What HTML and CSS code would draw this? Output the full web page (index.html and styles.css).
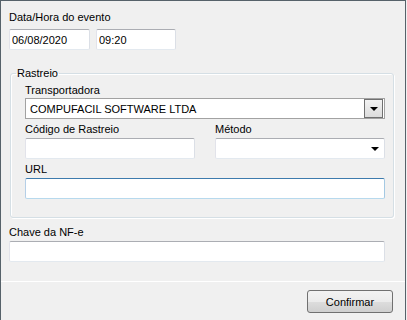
FILE: index.html
```html
<!DOCTYPE html>
<html lang="pt-BR">

<head>
  <meta charset="UTF-8">
  <link rel="stylesheet" href="styles.css">
  <title>Rastreio</title>
</head>

<body>

  <div class="window">
    <div class="content">
      <div class="label">Data/Hora do evento</div>
      <div class="row">
        <input class="field date" type="text" value="06/08/2020">
        <input class="field time" type="text" value="09:20">
      </div>

      <fieldset class="group">
        <legend>Rastreio</legend>
        <div class="label">Transportadora</div>
        <div class="combo">
          <span>COMPUFACIL SOFTWARE LTDA</span>
          <span class="combo-btn"><span class="arrow"></span></span>
        </div>
        <div class="cols">
          <div class="col">
            <div class="label">Código de Rastreio</div>
            <input class="field" type="text">
          </div>
          <div class="col">
            <div class="label">Método</div>
            <div class="select"><span class="arrow"></span></div>
          </div>
        </div>
        <div class="label">URL</div>
        <input class="field focus" type="text">
      </fieldset>

      <div class="label">Chave da NF-e</div>
      <input class="field chave" type="text">
    </div>

    <div class="footer">
      <button class="btn">Confirmar</button>
    </div>
  </div>

</body>

</html>
```

FILE: styles.css
```css
body {
  margin: 0;
  background-color: #f0f0f0;
  font-family: 'Liberation Sans', Arial, sans-serif;
  font-size: 11px;
  color: #000;
}

.window {
  width: 406px;
  height: 320px;
  box-sizing: border-box;
  border: 1px solid #56626a;
  border-bottom: none;
  background-color: #f0f0f0;
  display: flex;
  flex-direction: column;
}

.content {
  padding: 10px 0 0 8px;
}

.label {
  line-height: 13px;
  height: 13px;
}

.row {
  display: flex;
  gap: 6px;
  margin-top: 5px;
}

.field {
  display: block;
  box-sizing: border-box;
  height: 21px;
  margin: 0;
  padding: 0 2px;
  border: 1px solid;
  border-color: #abadb3 #dbdfe6 #e3e9ef #e2e3ea;
  border-radius: 2px;
  background-color: #fff;
  font-family: inherit;
  font-size: 11px;
  color: #000;
  outline: none;
}

.date {
  width: 81px;
}

.time {
  width: 80px;
}

.group {
  margin: 17px 0 0 1px;
  width: 384px;
  box-sizing: border-box;
  padding: 4px 8px 18px 14px;
  border: 1px solid #d5dfe5;
  border-radius: 3px;
  box-shadow: inset 1px 1px #fff, 1px 1px #fff;
}

.group legend {
  padding: 0 1px;
  margin-left: -9px;
  line-height: 13px;
}

.group .field,
.combo {
  width: 360px;
}

.combo {
  box-sizing: border-box;
  height: 21px;
  margin-top: 1px;
  border: 1px solid #a2a2a2;
  background-color: #fff;
  display: flex;
  align-items: center;
  justify-content: space-between;
  padding: 0 1px 0 4px;
}

.combo-btn {
  width: 17px;
  height: 17px;
  border: 1px solid #707070;
  background: linear-gradient(#f2f2f2, #dcdcdc);
  display: flex;
  align-items: center;
  justify-content: center;
}

.arrow {
  width: 0;
  height: 0;
  border-left: 4px solid transparent;
  border-right: 4px solid transparent;
  border-top: 4px solid #000;
}

.cols {
  display: flex;
  gap: 20px;
  margin-top: 4px;
}

.col .field {
  width: 170px;
  margin-top: 2px;
}

.select {
  box-sizing: border-box;
  width: 170px;
  height: 21px;
  margin-top: 2px;
  border: 1px solid;
  border-color: #abadb3 #dbdfe6 #e3e9ef #e2e3ea;
  border-radius: 2px;
  background-color: #fff;
  display: flex;
  align-items: center;
  justify-content: flex-end;
  padding-right: 5px;
}

.cols + .label {
  margin-top: 4px;
}

.group .label + .field {
  margin-top: 2px;
}

.field.focus {
  border-color: #3d7bad #a4c9e3 #b7d9ed #b5cfe7;
}

.group + .label {
  margin-top: 8px;
}

.chave {
  width: 376px;
  margin-top: 2px;
}

.footer {
  margin-top: 19px;
  border-top: 1px solid #fff;
  display: flex;
  justify-content: flex-end;
  padding: 8px 12px 0 0;
}

.btn {
  width: 86px;
  height: 23px;
  border: 1px solid #707070;
  border-radius: 3px;
  background: linear-gradient(#f2f2f2 0%, #ebebeb 50%, #dddddd 51%, #cfcfcf 100%);
  font-family: inherit;
  font-size: 11px;
  color: #000;
  padding: 0;
}
```
